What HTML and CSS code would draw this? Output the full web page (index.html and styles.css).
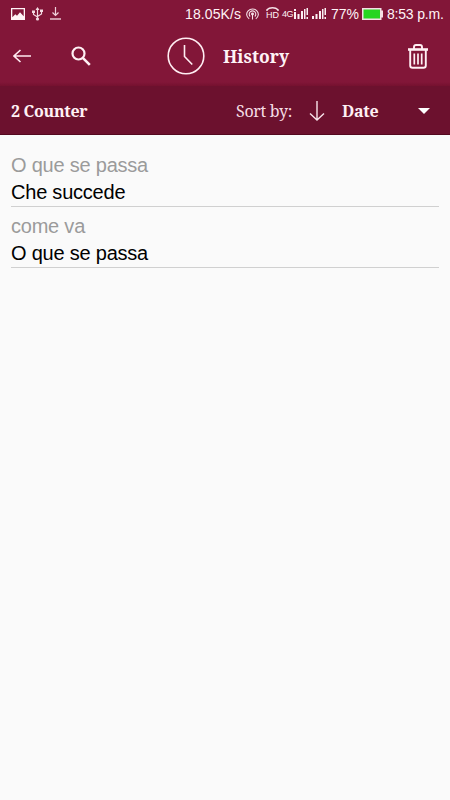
FILE: index.html
```
<!DOCTYPE html>
<html lang="en">
<head>
    <meta charset="UTF-8">
    <meta name="viewport" content="width=device-width, initial-scale=1.0">
    <title>History</title>
    <link rel="stylesheet" href="styles.css">
</head>
<body>
<header class="top">
    <div class="status-bar">
        <svg class="st-image" width="14" height="12" viewBox="0 0 14 12"><path fill="#fff3f6" fill-rule="evenodd" d="M0 0h14v12H0zM1.3 1.3v8l3-3 1.7 1.4L9 4.3l3.7 4V1.3z"/></svg>
        <svg class="st-usb" width="11" height="14" viewBox="0 0 11 14" fill="none" stroke="#f3dce3" stroke-width="1.2"><path d="M5.5 1v11M1.5 5v2.5l4 2.5M9.5 4v3l-4 2.5"/><path fill="#f3dce3" stroke="none" d="M5.5 0l2 3h-4zM0 3.5h3v2.5H0zM8 2.5h3V5H8z"/><circle cx="5.5" cy="12" r="1.6" fill="#f3dce3" stroke="none"/></svg>
        <svg class="st-down" width="11" height="13" viewBox="0 0 11 13" fill="none" stroke="#f0d0da" stroke-width="1.2"><path d="M5.5 0v8.5M2.5 5.5l3 3 3-3"/><path stroke-width="1.4" d="M0 12h11"/></svg>
        <span class="speed">18.05K/s</span>
        <svg class="st-hotspot" width="13" height="12" viewBox="0 0 13 12" fill="none" stroke="#f5e0e7" stroke-width="1.1"><path d="M3.2 10.8a5.8 5.4 0 1 1 6.6 0M4.2 8.5a3.3 3.2 0 1 1 4.6 0M6.5 6v5.5"/><circle cx="6.5" cy="6" r=".9" fill="#f5e0e7"/></svg>
        <span class="hd">
            <svg width="13" height="4" viewBox="0 0 13 4"><path fill="none" stroke="#f5e0e7" stroke-width="1.5" d="M1 4V2.8C3.5.2 9.5.2 12 2.8V4"/></svg>
            <b>HD</b>
        </span>
        <span class="net">4G</span>
        <svg class="st-signal" width="14" height="11" viewBox="0 0 14 11"><path fill="#fbeff3" d="M0 4h2v7H0zM3.5 6h2v5h-2zM7 3h2v8H7zM10 1h1.5v10H10zM12.5 0H14v7h-1.5zM12.5 9H14v2h-1.5zM0 1h2v2H0z"/></svg>
        <svg class="st-signal2" width="14" height="11" viewBox="0 0 14 11"><path fill="#fbeff3" d="M0 8h2v3H0zM3.5 6h2v5h-2zM7 3h2v8H7zM10 1h1.5v10H10zM12.5 0H14v7h-1.5zM12.5 9H14v2h-1.5z"/></svg>
        <span class="percent">77%</span>
        <svg class="st-battery" width="22" height="12" viewBox="0 0 22 12"><path fill="#f5dfe5" d="M0 0h19.5v2.5H21v7h-1.5V12H0z"/><path fill="#27d51f" d="M1.5 1.5H18v9H1.5z"/></svg>
        <span class="time">8:53 p.m.</span>
    </div>

    <div class="toolbar">
        <svg class="back" width="18" height="14" viewBox="0 0 18 14" fill="none" stroke="#ffeaf0" stroke-width="1.6"><path d="M7.5 1L1 7l6.5 6M1 7h17"/></svg>
        <svg class="search" width="20" height="20" viewBox="0 0 20 20" fill="none" stroke="#fff0f4" stroke-width="2.2"><circle cx="7.5" cy="7.5" r="6"/><path stroke-width="2.6" d="M11.8 11.8l7 7"/></svg>
        <svg class="clock" width="38" height="38" viewBox="0 0 38 38" fill="none" stroke="#ffedf2" stroke-width="1.6"><circle cx="19" cy="19" r="17.8"/><path d="M17.5 8v11.5l7.8 8"/></svg>
        <h1>History</h1>
        <svg class="trash" width="20" height="25" viewBox="0 0 20 25" fill="none" stroke="#fff0f4" stroke-width="1.9"><path d="M0 5.5h20" stroke-width="2.6"/><path d="M6 5V3q0-2 2-2h4q2 0 2 2v2M2.2 6v15.5q0 2.300 2.300 2.300h11q2.300 0 2.300-2.300V6"/><path stroke-width="1.7" d="M6.3 9.500v11M10 9.500v11M13.7 9.500v11"/></svg>
    </div>
</header>

<div class="sort-bar">
    <span class="counter">2 Counter</span>
    <span class="sort-label">Sort by:</span>
    <svg class="sort-arrow" width="16" height="20" viewBox="0 0 16 20" fill="none" stroke="#f8e3ea" stroke-width="1.4"><path d="M8 0v19M1 12.5l7 6.5 7-6.5"/></svg>
    <span class="sort-value">Date</span>
    <svg class="caret" width="12" height="6" viewBox="0 0 12 6"><path fill="#fff" d="M0 0h12L6 6z"/></svg>
</div>

<ul class="history">
    <li>
        <span class="from">O que se passa</span>
        <span class="to">Che succede</span>
    </li>
    <li>
        <span class="from">come va</span>
        <span class="to">O que se passa</span>
    </li>
</ul>
</body>
</html>
```

FILE: styles.css
```
body {
    margin: 0;
    min-height: 800px;
    background-color: #fafafa;
    font-family: "Liberation Sans", Arial, sans-serif;
}

svg {
    display: block;
    flex: none;
}

.top {
    height: 86px;
    background: linear-gradient(#821638 82px, #75112f 86px);
    color: #fff3f6;
}

.status-bar {
    display: flex;
    align-items: center;
    height: 27px;
    padding-left: 11px;
    font-size: 14px;
    white-space: nowrap;
}

.st-usb {
    margin-left: 7px;
}

.st-down {
    margin-left: 7px;
}

.speed {
    width: 57px;
    margin-left: 124px;
    letter-spacing: 0.1px;
}

.st-hotspot {
    margin-left: 4px;
}

.hd {
    width: 13px;
    margin-left: 7px;
}

.hd b {
    display: block;
    font-size: 9px;
    font-weight: normal;
    line-height: 9px;
    text-align: center;
}

.net {
    width: 12px;
    margin-left: 3px;
    font-size: 9px;
    letter-spacing: -0.5px;
}

.st-signal2 {
    margin-left: 4px;
}

.percent {
    width: 28px;
    margin-left: 5px;
}

.st-battery {
    margin-left: 3px;
}

.time {
    margin-left: 3px;
    letter-spacing: -0.2px;
}

.toolbar {
    display: flex;
    align-items: center;
    height: 58px;
    padding: 0 22px 0 13px;
}

.search {
    margin-left: 40px;
}

.clock {
    margin-left: 76px;
}

h1 {
    margin: 0 0 0 18px;
    font-family: "Noto Serif", "Droid Serif", "DejaVu Serif Condensed", "Liberation Serif", serif;
    font-size: 17.5px;
}

.trash {
    margin-left: auto;
}

.sort-bar {
    display: flex;
    align-items: center;
    box-sizing: border-box;
    height: 49px;
    padding: 2px 20px 0 11px;
    border-bottom: 1px solid #54081f;
    background-color: #6c112e;
    color: #fff0f4;
    font-family: "Noto Serif", "Droid Serif", "DejaVu Serif Condensed", "Liberation Serif", serif;
    font-size: 16px;
    letter-spacing: -0.3px;
    white-space: nowrap;
}

.counter {
    width: 225px;
    font-weight: bold;
}

.sort-label {
    width: 73px;
    color: #f5dde4;
}

.sort-value {
    margin-left: 17px;
    font-weight: bold;
}

.caret {
    margin-left: auto;
}

.history {
    margin: 0;
    padding: 11px 11px 0;
    list-style: none;
    font-size: 20px;
    letter-spacing: -0.22px;
}

.history li {
    box-sizing: border-box;
    height: 61px;
    padding-top: 6px;
    border-bottom: 1px solid #d0d0d0;
}

.history span {
    display: block;
    line-height: 27px;
}

.from {
    color: #9b9b9b;
}

.to {
    color: #000;
}
```
